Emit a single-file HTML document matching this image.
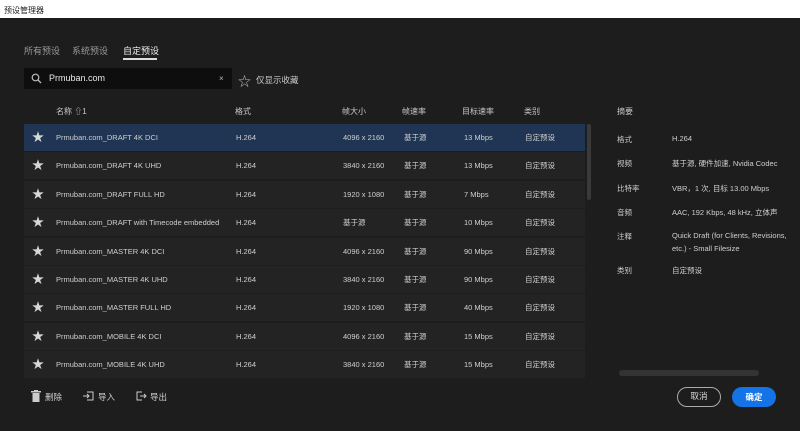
<!DOCTYPE html><html><head><meta charset="utf-8"><style>
*{margin:0;padding:0;box-sizing:border-box}
body{width:800px;height:431px;background:#1d1d1d;font-family:"Liberation Sans","Noto Sans CJK SC",sans-serif;color:#cfcfcf;position:relative;overflow:hidden;font-size:8px}
.a{position:absolute;white-space:nowrap}
.title{left:0;top:0;width:800px;height:18px;background:#fff;color:#222;font-size:8px;padding:5px 4px}
.row{position:absolute;left:24px;width:561px;height:27px;background:#232323}
.row span{position:absolute;top:0;line-height:27px;height:27px;font-size:7.5px;color:#cfcfcf}
.row.sel{background:#1f3553}
.row span.star{left:8px;font-size:12px;color:#d8d8d8}
.h{top:106px;font-size:8px;color:#c8c8c8}
.lb{left:617px;font-size:7.5px}
.vl{left:672px;font-size:7.5px}
</style></head><body>
<div class="a title">预设管理器</div>
<div class="a" style="left:24px;top:44px;font-size:9px;color:#9a9a9a">所有预设</div>
<div class="a" style="left:72px;top:44px;font-size:9px;color:#9a9a9a">系统预设</div>
<div class="a" style="left:123px;top:44px;font-size:9px;color:#eee">自定预设</div>
<div class="a" style="left:123px;top:58px;width:34px;height:2px;background:#ddd"></div>
<div class="a" style="left:24px;top:68px;width:208px;height:21px;background:#0e0e0e"></div>
<svg class="a" style="left:31px;top:73px" width="11" height="11" viewBox="0 0 11 11"><circle cx="4.5" cy="4.5" r="3.3" fill="none" stroke="#bbb" stroke-width="1.2"/><line x1="7" y1="7" x2="10" y2="10" stroke="#bbb" stroke-width="1.3"/></svg>
<div class="a" style="left:49px;top:73px;font-size:9px;color:#e8e8e8">Prmuban.com</div>
<div class="a" style="left:219px;top:74px;font-size:8px;color:#bbb">×</div>
<div class="a" style="left:238px;top:71px;font-size:13px;color:#bbb">☆</div>
<div class="a" style="left:256px;top:74px;font-size:8.5px;color:#ccc">仅显示收藏</div>
<div class="a h" style="left:56px">名称 ⇧1</div>
<div class="a h" style="left:235px">格式</div>
<div class="a h" style="left:342px">帧大小</div>
<div class="a h" style="left:402px">帧速率</div>
<div class="a h" style="left:462px">目标速率</div>
<div class="a h" style="left:524px">类别</div>
<div class="a h" style="left:617px">摘要</div>
<div id="rows"></div>
<div class="a" style="left:587px;top:124px;width:4px;height:76px;background:#3a3a3a;border-radius:2px"></div>
<div class="a lb" style="top:134px">格式</div><div class="a vl" style="top:134px">H.264</div>
<div class="a lb" style="top:158px">视频</div><div class="a vl" style="top:158px">基于源, 硬件加速, Nvidia Codec</div>
<div class="a lb" style="top:183px">比特率</div><div class="a vl" style="top:183px">VBR，1 次, 目标 13.00 Mbps</div>
<div class="a lb" style="top:207px">音频</div><div class="a vl" style="top:207px">AAC, 192 Kbps, 48 kHz, 立体声</div>
<div class="a lb" style="top:231px">注释</div><div class="a vl" style="top:231px">Quick Draft (for Clients, Revisions,</div><div class="a vl" style="top:244px">etc.) - Small Filesize</div>
<div class="a lb" style="top:265px">类别</div><div class="a vl" style="top:265px">自定预设</div>
<div class="a" style="left:619px;top:370px;width:140px;height:6px;background:#333;border-radius:3px"></div>
<svg class="a" style="left:31px;top:390px" width="10" height="12" viewBox="0 0 10 12"><rect x="0" y="1" width="10" height="1.5" fill="#ccc"/><rect x="3" y="0" width="4" height="1.5" fill="#ccc"/><rect x="1.5" y="3" width="7" height="9" fill="#ccc"/></svg>
<div class="a" style="left:45px;top:391px;font-size:8.5px">删除</div>
<svg class="a" style="left:83px;top:391px" width="11" height="10" viewBox="0 0 11 10" fill="none" stroke="#ccc" stroke-width="1"><path d="M4 1h6v8H4M0 5h6M4 3l2 2-2 2"/></svg>
<div class="a" style="left:98px;top:391px;font-size:8.5px">导入</div>
<svg class="a" style="left:136px;top:391px" width="11" height="10" viewBox="0 0 11 10" fill="none" stroke="#ccc" stroke-width="1"><path d="M6 1H1v8h5M4 5h6M8 3l2 2-2 2"/></svg>
<div class="a" style="left:150px;top:391px;font-size:8.5px">导出</div>
<div class="a" style="left:677px;top:387px;width:44px;height:20px;border:1.5px solid #aaa;border-radius:10px;text-align:center;line-height:17px;font-size:8.5px;color:#ddd">取消</div>
<div class="a" style="left:732px;top:387px;width:44px;height:20px;background:#1473e6;border-radius:10px;text-align:center;line-height:20px;font-size:8.5px;color:#fff;font-weight:bold">确定</div>
<script>
var d=[["Prmuban.com_DRAFT 4K DCI","4096 x 2160","13 Mbps"],["Prmuban.com_DRAFT 4K UHD","3840 x 2160","13 Mbps"],["Prmuban.com_DRAFT FULL HD","1920 x 1080","7 Mbps"],["Prmuban.com_DRAFT with Timecode embedded","基于源","10 Mbps"],["Prmuban.com_MASTER 4K DCI","4096 x 2160","90 Mbps"],["Prmuban.com_MASTER 4K UHD","3840 x 2160","90 Mbps"],["Prmuban.com_MASTER FULL HD","1920 x 1080","40 Mbps"],["Prmuban.com_MOBILE 4K DCI","4096 x 2160","15 Mbps"],["Prmuban.com_MOBILE 4K UHD","3840 x 2160","15 Mbps"]];
var h="";d.forEach(function(r,i){var t=Math.round(124+i*28.4);h+='<div class="row'+(i==0?' sel':'')+'" style="top:'+t+'px"><span class="star">★</span><span style="left:32px">'+r[0]+'</span><span style="left:212px">H.264</span><span style="left:319px">'+r[1]+'</span><span style="left:380px">基于源</span><span style="left:440px">'+r[2]+'</span><span style="left:501px">自定预设</span></div>'});
document.getElementById("rows").innerHTML=h;
</script>
</body></html>
